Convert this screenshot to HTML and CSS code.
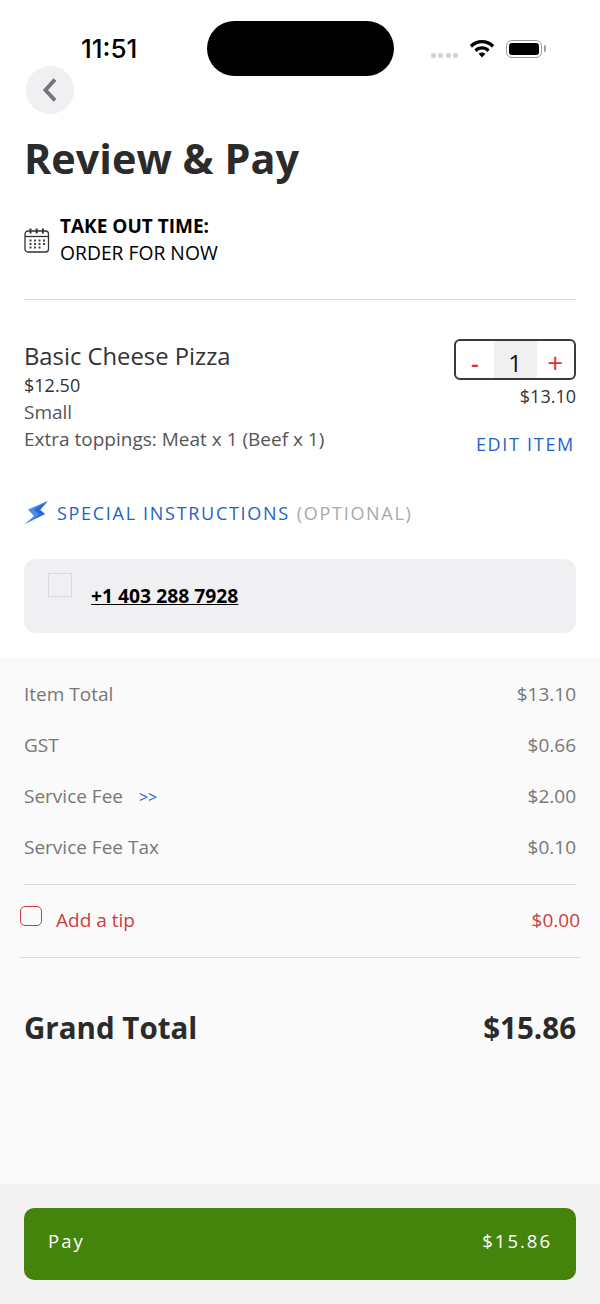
FILE: index.html
```html
<!DOCTYPE html>
<html lang="en">
<head>
    <meta charset="UTF-8">
    <meta name="viewport" content="width=device-width, initial-scale=1.0">
    <title>Review &amp; Pay</title>
    <link rel="stylesheet" href="styles.css">
</head>
<body>
    <div class="screen">
        <div class="status-bar">
            <span class="clock">11:51</span>
            <div class="island"></div>
            <div class="status-icons">
                <span class="signal"><i></i><i></i><i></i><i></i></span>
                <svg class="wifi" width="26" height="19" viewBox="0 0 24 18">
                    <path d="M.5 5.800a16 16 0 0 1 23 0l-2 2.400a13 13 0 0 0-19 0z" fill="#000"/>
                    <path d="M4.800 10a10 10 0 0 1 14.400 0l-2 2.200a7 7 0 0 0-10.400 0z" fill="#000"/>
                    <path d="M8.800 14a4.600 4.600 0 0 1 6.400 0l-3.200 3.600z" fill="#000"/>
                </svg>
                <span class="battery"><i></i></span>
            </div>
        </div>

        <div class="top">
            <button class="back" type="button">
                <svg width="16" height="26" viewBox="0 0 16 26"><path d="M13 2.500 3.500 13l9.500 10.500" fill="none" stroke="#77777b" stroke-width="4"/></svg>
            </button>
            <h1>Review &amp; Pay</h1>

            <div class="pickup">
                <svg class="calendar" width="26" height="26" viewBox="0 0 26 26">
                    <rect x="1" y="4" width="23.500" height="21" rx="3" fill="none" stroke="#333" stroke-width="1.300"/>
                    <path d="M1 9.500h23.500" stroke="#333" stroke-width="1.300"/>
                    <path d="M6.500 1.500v5M12.700 1.500v5M18.900 1.500v5" stroke="#333" stroke-width="2"/>
                    <path d="M5.500 13.500h2M10 13.500h2M14.500 13.500h2M19 13.500h2M5.500 17h2M10 17h2M14.500 17h2M19 17h2M5.500 20.500h2M10 20.500h2M14.500 20.500h2" stroke="#444" stroke-width="2"/>
                </svg>
                <div>
                    <div class="pickup-title">TAKE OUT TIME:</div>
                    <div class="pickup-value">ORDER FOR NOW</div>
                </div>
            </div>

            <div class="item">
                <div class="item-info">
                    <div class="item-name">Basic Cheese Pizza</div>
                    <div class="item-price">$12.50</div>
                    <div class="muted">Small</div>
                    <div class="muted">Extra toppings: Meat x 1 (Beef x 1)</div>
                </div>
                <div class="item-side">
                    <div class="stepper">
                        <span class="step step-minus">-</span>
                        <span class="qty">1</span>
                        <span class="step step-plus">+</span>
                    </div>
                    <div class="item-total">$13.10</div>
                    <a class="edit" href="#">EDIT ITEM</a>
                </div>
            </div>

            <div class="special">
                <svg width="26" height="25" viewBox="0 0 26 25">
                    <path d="M23.700 1 4 9.500l6 6.500L.3 24.500 21 14l-5-4z" fill="#4d8bee"/>
                    <path d="M23.700 1 9.500 9.500l5.500 5L9 19.500 21 14l-5-4z" fill="#2a69d6"/>
                </svg>
                <span class="special-label">SPECIAL INSTRUCTIONS</span>
                <span class="special-opt">(OPTIONAL)</span>
            </div>

            <div class="note">
                <span class="note-box"></span>
                <a class="phone" href="#">+1 403 288 7928</a>
            </div>
        </div>

        <div class="summary">
            <div class="row"><span>Item Total</span><span>$13.10</span></div>
            <div class="row"><span>GST</span><span>$0.66</span></div>
            <div class="row"><span>Service Fee <a class="more" href="#">&gt;&gt;</a></span><span>$2.00</span></div>
            <div class="row"><span>Service Fee Tax</span><span>$0.10</span></div>
            <div class="tip">
                <span class="tip-label"><span class="tip-box"></span>Add a tip</span>
                <span>$0.00</span>
            </div>
            <div class="grand"><span>Grand Total</span><span>$15.86</span></div>
        </div>

        <div class="footer">
            <button class="pay" type="button"><span>Pay</span><span>$15.86</span></button>
        </div>
    </div>
</body>
</html>
```

FILE: styles.css
```css
* {
    box-sizing: border-box;
}
body {
    margin: 0;
    font-family: "Open Sans", sans-serif;
    background-color: #fff;
    color: #333;
}
.screen {
    width: 600px;
    height: 1304px;
    display: flex;
    flex-direction: column;
    position: relative;
    overflow: hidden;
}

/* status bar */
.status-bar {
    height: 66px;
    flex: none;
    position: relative;
    display: flex;
    justify-content: space-between;
    padding: 34px 58px 0 81px;
}
.clock {
    font-family: Inter, sans-serif;
    font-size: 26px;
    font-weight: 500;
    line-height: 30px;
    color: #000;
}
.island {
    position: absolute;
    left: 207px;
    top: 21px;
    width: 187px;
    height: 55px;
    border-radius: 28px;
    background: #000;
}
.status-icons {
    display: flex;
    align-items: flex-start;
    height: 24px;
    margin-top: 6px;
}
.signal {
    display: flex;
    gap: 2.500px;
    margin-top: 13px;
    margin-right: 11px;
}
.signal i {
    width: 5px;
    height: 5px;
    border-radius: 2px;
    background: #d2d2d4;
}
.wifi {
    margin-top: -1px;
    margin-right: 11px;
}
.battery {
    width: 36px;
    height: 18px;
    padding: 2px;
    border: 1.500px solid #9a9a9a;
    border-radius: 6px;
    position: relative;
}
.battery i {
    display: block;
    height: 100%;
    border-radius: 3px;
    background: #000;
}
.battery::after {
    content: "";
    position: absolute;
    right: -5px;
    top: 4px;
    width: 2px;
    height: 7px;
    border-radius: 0 2px 2px 0;
    background: #9a9a9a;
}

.top {
    padding: 0 24px;
}
.back {
    display: flex;
    align-items: center;
    justify-content: center;
    width: 48px;
    height: 48px;
    margin-left: 2px;
    padding: 0;
    border: none;
    border-radius: 50%;
    background-color: #f0f0f2;
}
h1 {
    margin: 16px 0 0;
    font-size: 41.400px;
    font-weight: 700;
    line-height: 56px;
    color: #2b2b2b;
}
.pickup {
    display: flex;
    align-items: center;
    gap: 10px;
    margin-top: 27px;
    padding-bottom: 33px;
    border-bottom: 1px solid #dcdcdc;
    color: #000;
    font-size: 19px;
    line-height: 27px;
}
.pickup-title {
    font-weight: 700;
}
.pickup-value {
    font-size: 19.300px;
    line-height: 26px;
}

.item {
    display: flex;
    justify-content: space-between;
    margin-top: 39px;
    font-size: 19px;
    line-height: 27px;
}
.item-name {
    padding-top: 2px;
    font-size: 23.800px;
    line-height: 31px;
}
.item-price {
    font-size: 18px;
}
.muted {
    color: #555;
}
.item-side {
    display: flex;
    flex-direction: column;
    align-items: flex-end;
    font-size: 18px;
}
.stepper {
    display: flex;
    width: 122px;
    height: 41px;
    border: 2px solid #3a3a3a;
    border-radius: 6px;
    font-size: 24px;
    line-height: 44px;
    text-align: center;
}
.step {
    flex: 1;
    color: #d8343a;
}
.step-minus {
    font-weight: 600;
}
.step-plus {
    font-size: 28px;
    line-height: 42px;
}
.qty {
    width: 43px;
    background-color: #f0f0f2;
    color: #111;
}
.item-total {
    margin-top: 3px;
}
.edit {
    margin-top: 21px;
    margin-right: 1px;
    color: #1d62c9;
    letter-spacing: 1.700px;
    text-decoration: none;
}

.special {
    display: flex;
    align-items: center;
    margin-top: 42px;
    font-size: 18px;
    letter-spacing: 1.700px;
}
.special svg {
    margin-right: 7px;
}
.special-label {
    color: #1d62c9;
}
.special-opt {
    margin-left: 7px;
    color: #a9a9a9;
}
.note {
    display: flex;
    height: 74px;
    margin-top: 34px;
    padding: 14px 24px;
    border-radius: 12px;
    background-color: #f0f0f2;
}
.note-box {
    width: 24px;
    height: 24px;
    border: 1px solid #d9d9db;
}
.phone {
    margin: 9px 0 0 19px;
    font-size: 19.300px;
    line-height: 28px;
    font-weight: 700;
    color: #000;
    text-decoration: underline;
    align-self: flex-start;
}

/* totals */
.summary {
    flex: 1;
    margin-top: 24px;
    padding: 13px 24px 0;
    background-color: #fafafa;
    font-size: 19px;
    color: #777;
}
.row {
    display: flex;
    justify-content: space-between;
    height: 51px;
    line-height: 49px;
}
.more {
    margin-left: 11px;
    font-size: 16px;
    color: #1d62c9;
    text-decoration: none;
}
.tip {
    display: flex;
    justify-content: space-between;
    align-items: center;
    height: 74px;
    margin: 10px -4px 0;
    padding-bottom: 2px;
    border-bottom: 1px solid #dcdcdc;
    color: #cf3a42;
    background: linear-gradient(#dcdcdc, #dcdcdc) 4px 0 / 552px 1px no-repeat;
}
.tip-label {
    display: flex;
    align-items: center;
}
.tip-box {
    width: 22px;
    height: 20px;
    margin: -8px 14px 0 0;
    border: 1.500px solid #cf3a42;
    border-radius: 5px;
}
.grand {
    display: flex;
    justify-content: space-between;
    margin-top: 48px;
    font-size: 29.500px;
    line-height: 44px;
    font-weight: 700;
    color: #2b2b2b;
}

.footer {
    height: 120px;
    flex: none;
    padding: 24px;
    background-color: #f3f3f3;
}
.pay {
    display: flex;
    justify-content: space-between;
    align-items: center;
    width: 100%;
    height: 72px;
    padding: 0 24px 8px;
    border: none;
    border-radius: 10px;
    background-color: #44840c;
    color: #fff;
    font-family: "Open Sans", sans-serif;
    font-size: 18.500px;
    letter-spacing: 2px;
}
```
